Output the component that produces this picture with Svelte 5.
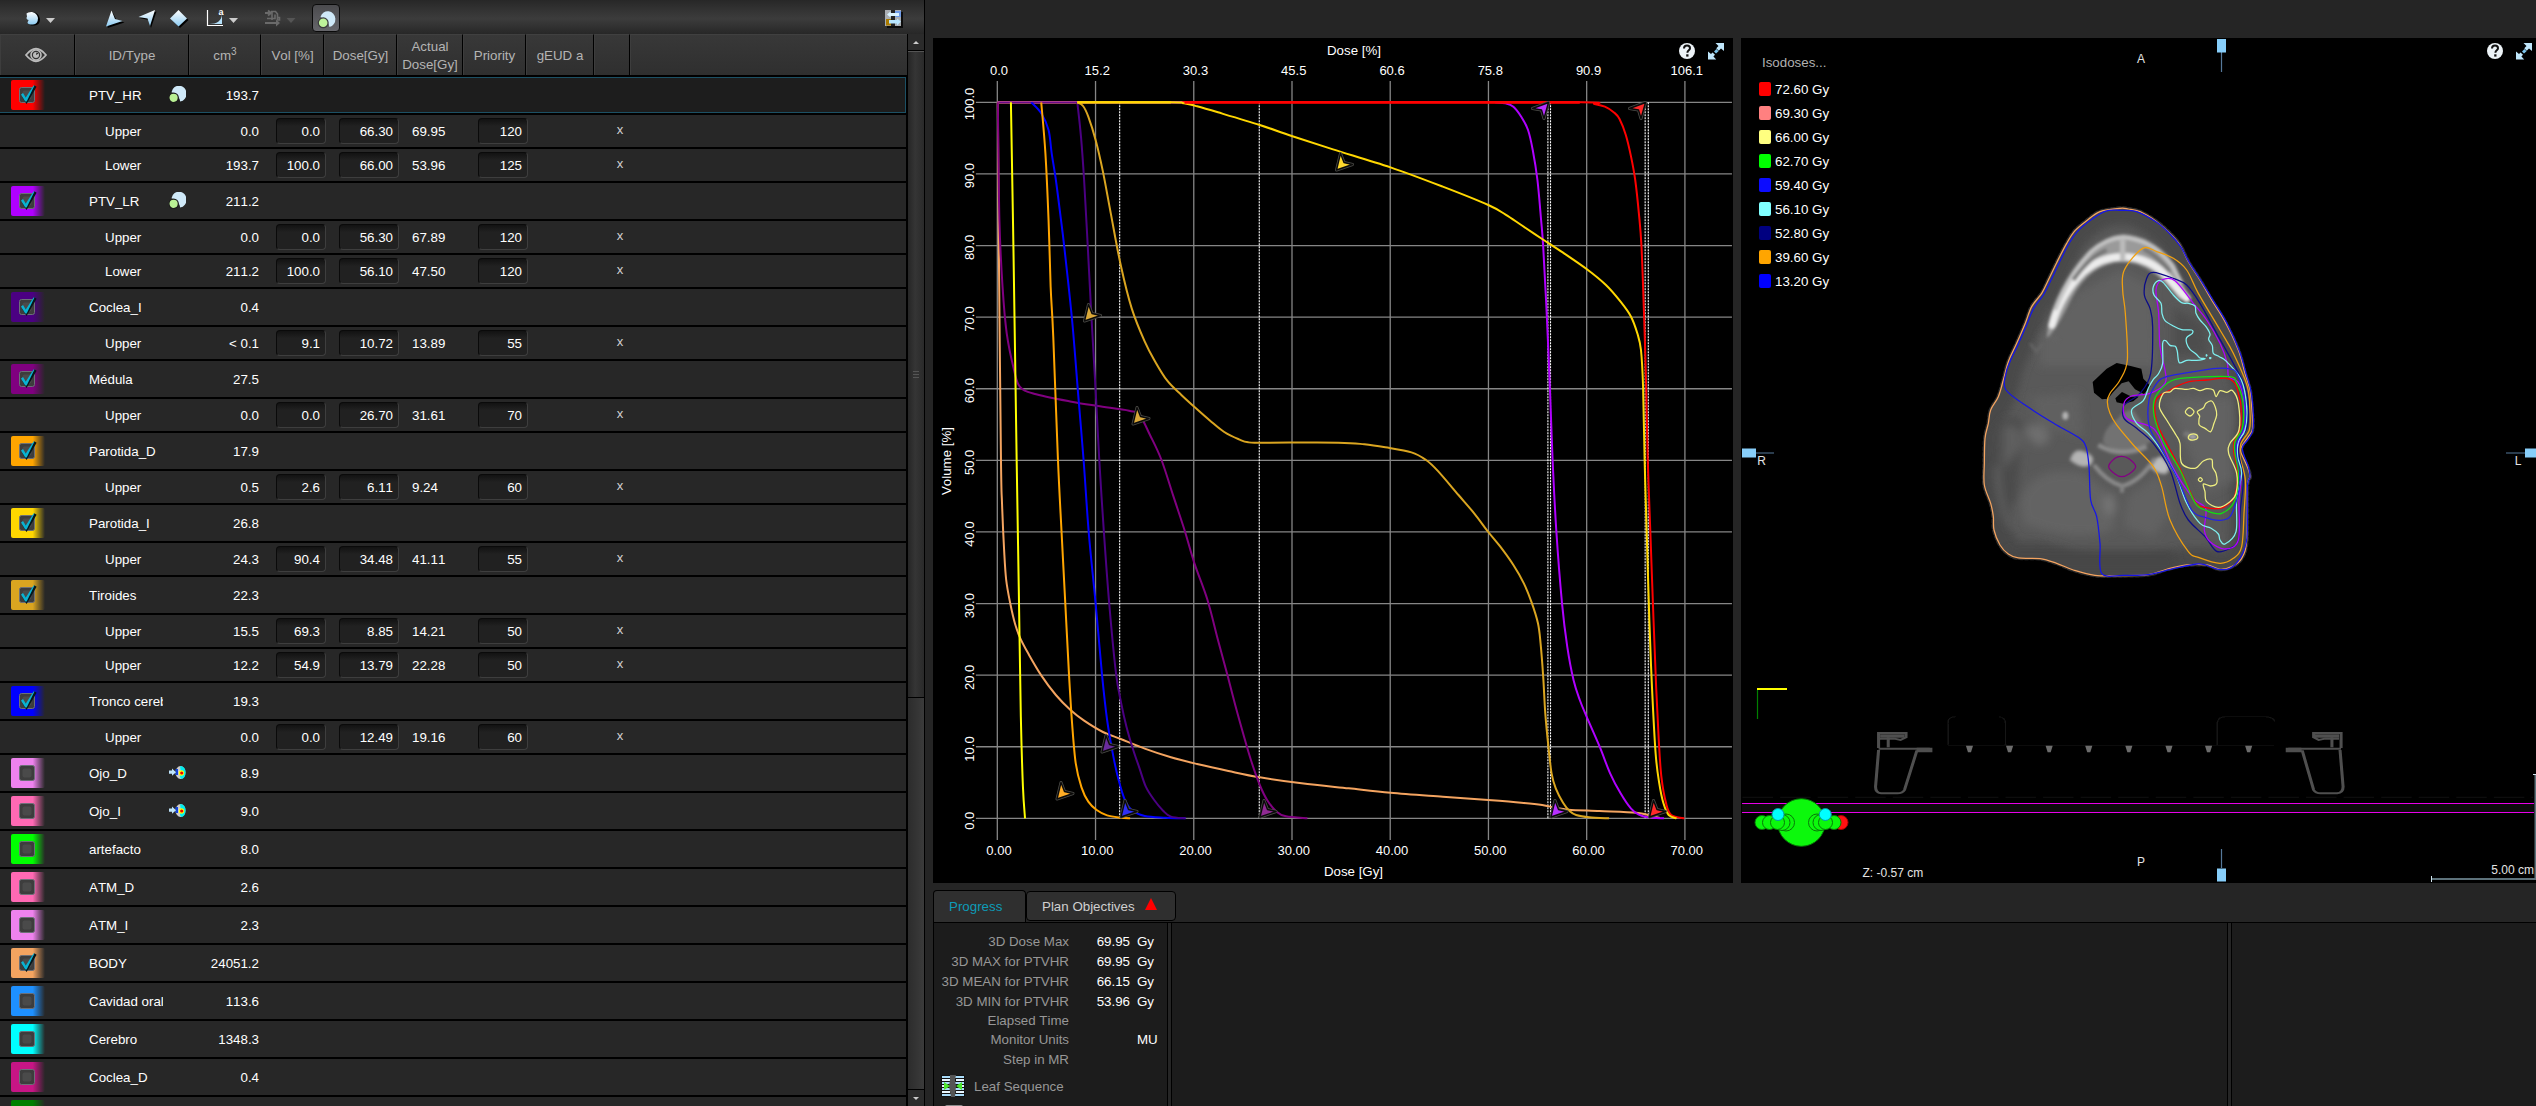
<script>
  const headers = [
    { w: 75, icon: 'eye' }, { w: 114, t: 'ID/Type' }, { w: 72, t: 'cm', sup: '3' }, { w: 63, t: 'Vol [%]' },
    { w: 73, t: 'Dose[Gy]' }, { w: 66, t: 'Actual Dose[Gy]' }, { w: 63, t: 'Priority' }, { w: 68, t: 'gEUD a' },
    { w: 36, t: '' }, { w: 278, t: '' }
  ];

  const structures = [
    { name: 'PTV_HR', c: '#ff0000', v: '193.7', on: true, icon: 'target', sel: true, obj: [
      ['Upper', '0.0', '0.0', '66.30', '69.95', '120'], ['Lower', '193.7', '100.0', '66.00', '53.96', '125']] },
    { name: 'PTV_LR', c: '#b000ff', v: '211.2', on: true, icon: 'target', obj: [
      ['Upper', '0.0', '0.0', '56.30', '67.89', '120'], ['Lower', '211.2', '100.0', '56.10', '47.50', '120']] },
    { name: 'Coclea_I', c: '#4b0082', v: '0.4', on: true, obj: [['Upper', '< 0.1', '9.1', '10.72', '13.89', '55']] },
    { name: 'Médula', c: '#800080', v: '27.5', on: true, obj: [['Upper', '0.0', '0.0', '26.70', '31.61', '70']] },
    { name: 'Parotida_D', c: '#ffa500', v: '17.9', on: true, obj: [['Upper', '0.5', '2.6', '6.11', '9.24', '60']] },
    { name: 'Parotida_I', c: '#ffd700', v: '26.8', on: true, obj: [['Upper', '24.3', '90.4', '34.48', '41.11', '55']] },
    { name: 'Tiroides', c: '#daa520', v: '22.3', on: true, obj: [
      ['Upper', '15.5', '69.3', '8.85', '14.21', '50'], ['Upper', '12.2', '54.9', '13.79', '22.28', '50']] },
    { name: 'Tronco cerebral', c: '#0000ff', v: '19.3', on: true, obj: [['Upper', '0.0', '0.0', '12.49', '19.16', '60']] },
    { name: 'Ojo_D', c: '#ee82ee', v: '8.9', icon: 'spare', obj: [] },
    { name: 'Ojo_I', c: '#ff69b4', v: '9.0', icon: 'spare', obj: [] },
    { name: 'artefacto', c: '#00ff00', v: '8.0', obj: [] },
    { name: 'ATM_D', c: '#ff69b4', v: '2.6', obj: [] },
    { name: 'ATM_I', c: '#ee82ee', v: '2.3', obj: [] },
    { name: 'BODY', c: '#f4a460', v: '24051.2', on: true, obj: [] },
    { name: 'Cavidad oral', c: '#1e90ff', v: '113.6', obj: [] },
    { name: 'Cerebro', c: '#00ffff', v: '1348.3', obj: [] },
    { name: 'Coclea_D', c: '#c71585', v: '0.4', obj: [] },
    { name: '', c: '#008000', v: '', obj: [] }
  ];

  const isodoses = [
    ['72.60 Gy', '#ff0000'], ['69.30 Gy', '#ff8080'], ['66.00 Gy', '#ffff80'], ['62.70 Gy', '#00ff00'],
    ['59.40 Gy', '#0c0cff'], ['56.10 Gy', '#80ffff'], ['52.80 Gy', '#000080'], ['39.60 Gy', '#ffa500'], ['13.20 Gy', '#0000ff']
  ];

  const metrics = [
    ['3D Dose Max', '69.95', 'Gy', 20], ['3D MAX for PTVHR', '69.95', 'Gy', 20], ['3D MEAN for PTVHR', '66.15', 'Gy', 20],
    ['3D MIN for PTVHR', '53.96', 'Gy', 20], ['Elapsed Time', '', '', 19], ['Monitor Units', '', 'MU', 19], ['Step in MR', '', '', 20]
  ];

  const topTicks = ['0.0', '15.2', '30.3', '45.5', '60.6', '75.8', '90.9', '106.1'];
  const botTicks = ['0.00', '10.00', '20.00', '30.00', '40.00', '50.00', '60.00', '70.00'];
  const volTicks = ['100.0', '90.0', '80.0', '70.0', '60.0', '50.0', '40.0', '30.0', '20.0', '10.0', '0.0'];

  // Catmull-Rom spline through a flat list of x,y pairs
  function spline(s, closed = false, k = 6) {
    const n = s.trim().split(/[\s,]+/).map(Number);
    const p = [];
    for (let i = 0; i < n.length; i += 2) p.push([n[i], n[i + 1]]);
    const len = p.length;
    const at = (i) => (closed ? p[(i + len) % len] : p[Math.max(0, Math.min(len - 1, i))]);
    let d = `M${p[0][0]} ${p[0][1]}`;
    for (let i = 0; i < (closed ? len : len - 1); i++) {
      const a = at(i - 1), b = at(i), c = at(i + 1), e = at(i + 2);
      d += `C${b[0] + (c[0] - a[0]) / k} ${b[1] + (c[1] - a[1]) / k} ${c[0] - (e[0] - b[0]) / k} ${c[1] - (e[1] - b[1]) / k} ${c[0]} ${c[1]}`;
    }
    return closed ? d + 'Z' : d;
  }

  const curves = [
    ['#f4a460', '149,247 151,700 155,1320 157,1450 161,1590 165,1680 173,1752 182,1812 192,1855 207,1900 232,1966 260,2025 288,2070 314,2102 350,2136 384,2157 430,2186 480,2212 530,2232 590,2253 650,2272 730,2290 820,2305 900,2318 1000,2330 1087,2340 1150,2348 1190,2355 1215,2363 1240,2369 1300,2373 1370,2378 1395,2386 1415,2394'],
    ['#800080', '149,247 152,600 158,800 166,940 180,1050 191,1100 218,1121 290,1145 340,1158 400,1172 420,1185 440,1245 462,1320 485,1430 506,1530 525,1630 550,1740 570,1860 589,1970 603,2055 618,2140 633,2220 650,2295 664,2340 682,2375 700,2389 741,2395'],
    ['#ffff00', '174,247 179,700 185,1320 189,1700 193,2090 197,2300 201,2395'],
    ['#0000ff', '213,247 232,280 246,330 252,400 260,480 269,590 276,680 291,900 303,1130 313,1320 323,1540 336,1750 348,1960 358,2100 370,2210 380,2280 392,2340 405,2370 430,2388 470,2393 508,2395'],
    ['#ffa500', '232,247 240,400 246,600 250,800 255,950 264,1320 271,1540 278,1750 285,1960 291,2110 298,2230 309,2302 322,2345 338,2370 358,2386 384,2393 402,2395'],
    ['#4b0082', '301,247 308,350 314,480 321,680 328,890 336,1110 343,1320 352,1540 362,1750 375,1960 385,2050 395,2120 408,2190 420,2245 432,2300 448,2340 465,2372 480,2390 508,2395'],
    ['#daa520', '301,247 312,258 322,290 336,360 350,455 365,580 384,735 405,865 430,965 450,1025 473,1082 500,1125 523,1158 555,1202 582,1236 610,1258 628,1267 660,1268 800,1268 850,1273 890,1282 940,1297 968,1320 990,1352 1030,1425 1060,1480 1087,1536 1110,1580 1135,1635 1155,1690 1170,1748 1182,1810 1187,1870 1192,1970 1196,2080 1202,2180 1208,2260 1216,2305 1230,2348 1243,2374 1255,2385 1280,2392 1318,2395'],
    ['#b000ff', '1100,247 1120,250 1135,260 1150,290 1163,330 1172,390 1181,480 1188,600 1192,680 1199,890 1205,1110 1210,1320 1217,1530 1228,1750 1238,1880 1250,1980 1262,2040 1275,2090 1300,2180 1320,2260 1340,2320 1360,2366 1375,2384 1392,2392 1423,2395'],
    ['#ff0000', '501,247 900,247 1265,247 1290,252 1310,260 1328,278 1338,297 1350,345 1360,410 1368,480 1375,580 1380,680 1385,890 1389,1100 1392,1320 1397,1540 1403,1800 1408,2000 1413,2160 1418,2270 1427,2350 1437,2385 1462,2395'],
    ['#ffd700', '301,247 480,247 505,250 530,259 570,277 650,315 711,348 790,388 900,442 1000,500 1087,555 1120,584 1150,615 1190,657 1230,698 1275,747 1312,795 1340,845 1360,890 1372,940 1379,990 1383,1100 1386,1320 1390,1540 1395,1800 1400,2000 1407,2200 1414,2290 1422,2350 1432,2385 1447,2395']
  ];

  const dashes = [382, 649, 1201, 1206, 1387, 1393];

  // objective markers: tip x, tip y, colour, direction
  const markers = [
    [1336.5, 171, '#ffd92e', 0], [1084.5, 322, '#daa93a', 0], [1133, 425, '#daa93a', 0], [1102, 753, '#6a2c9c', 0],
    [1057, 800, '#ffad26', 0], [1121, 818, '#3030f4', 0], [1260, 818, '#8f2a92', 0], [1551, 818, '#b830ff', 0],
    [1649.5, 818, '#ff2a2a', 0], [1548.5, 102, '#b830ff', 1], [1645.5, 102, '#ff2a2a', 1]
  ];
  const marker = (up) => (up ? 'M0 .5L-16 6.500L-7 8L-4.500 16.500Z' : 'M0-1L4-17.500L7.500-8.500L16-6.500Z');

  const skin = '540,85 480,95 440,122 405,152 380,190 350,248 325,300 305,340 275,380 255,432 230,490 205,545 190,600 175,650 152,690 145,730 135,775 133,850 133,915 152,970 160,1010 162,1050 180,1095 205,1122 235,1134 300,1136 350,1150 400,1170 465,1186 545,1187 625,1184 680,1168 740,1155 800,1155 840,1168 875,1160 905,1135 920,1080 922,920 930,890 922,860 903,818 905,800 925,770 938,745 935,680 930,630 915,580 895,510 855,425 815,360 780,300 745,245 720,195 690,160 650,125 600,95 565,87';
  const contours = [
    ['#f4a460', skin],
    ['#1616e8', '485,1180 480,1090 470,1010 452,960 447,860 438,800 415,772 350,735 270,685 198,630 198,580 212,540 235,492 259,437 281,385 310,345 332,302 357,250 386,192 412,155 447,124 495,94 540,91 590,95 650,127 690,162 722,200 748,248 783,302 820,362 860,428 898,512 918,580 934,640 940,740 927,775 907,805 925,860 930,890 922,920 922,1050 918,1090 900,1135 870,1165 835,1168 800,1156 770,1152 700,1166 625,1184 550,1186'],
    ['#f0a010', '608,205 553,270 548,330 556,400 562,540 540,600 510,640 502,665 510,700 530,735 580,795 640,860 665,920 690,1020 745,1115 775,1132 840,1150 880,1135 905,1100 912,1000 916,900 900,830 903,790 928,750 930,700 922,620 880,520 840,450 775,340 740,270 700,235 650,215'],
    ['#0c0c88', '640,277 620,295 613,345 630,385 638,440 632,580 600,640 565,665 550,680 552,715 590,745 640,790 690,870 720,970 745,1020 795,1070 830,1114 870,1105 895,1080 901,990 910,900 898,830 898,790 922,740 925,680 915,620 880,550 830,460 780,370 740,315 700,295'],
    ['#b000ff', '665,300 705,302 760,370 800,420 840,490 862,550 866,590 893,605 910,650 914,740 893,800 893,870 903,900 897,960 895,1080 855,1107 810,1085 793,1050 797,985 760,955 700,865 655,765 625,737 560,715 552,670 575,648 630,640 675,610 675,570 660,500 656,400 648,330'],
    ['#7ff0f0', '655,302 640,320 642,345 663,370 666,400 675,422 700,438 725,449 755,450 757,460 740,473 740,490 750,508 768,522 780,534 795,536 770,541 740,541 718,548 712,515 706,499 690,496 677,482 668,490 668,550 655,582 640,598 625,625 610,662 575,690 590,730 625,760 670,820 710,890 740,970 780,1030 812,1044 835,1062 840,1080 855,1092 888,1055 890,960 905,880 893,830 895,785 915,750 920,680 904,600 860,545 838,530 820,520 817,497 806,478 810,462 798,440 780,420 768,400 765,378 745,370 725,368 700,345 670,308'],
    ['#2222e6', '680,590 760,575 830,565 870,567 890,580 912,650 915,730 890,790 890,830 900,900 890,960 870,1010 840,1021 795,1012 755,990 710,890 660,800 628,740 627,660 650,610'],
    ['#ff0000', '740,607 800,600 860,595 885,610 895,640 903,680 900,750 882,785 882,820 893,880 885,945 865,972 840,985 795,982 765,965 720,865 680,790 650,725 648,660 690,630'],
    ['#10e010', '700,600 760,592 870,590 890,610 908,660 908,740 885,785 885,820 895,880 885,960 845,1000 800,992 765,968 720,870 670,785 643,710 643,660 665,625'],
    ['#eeee80', '670,640 690,636 705,625 740,628 760,625 780,632 800,626 820,630 828,650 840,632 860,637 878,632 895,670 897,750 870,790 866,820 890,880 888,940 870,965 835,982 800,965 795,935 790,912 812,918 830,910 828,880 818,862 815,838 790,843 765,865 725,850 720,790 708,765 680,720 658,680'],
    ['#eeee80', '815,663 826,682 830,705 822,730 812,755 795,745 778,735 777,718 779,708 772,695 790,684 798,670'],
    ['#eeee80', '748,683 762,695 750,708 736,696'],
    ['#eeee80', '745,771 752,763 769,764 773,774 762,780 748,778'],
    ['#eeee80', '781,893 787,899 781,905 775,899'],
    ['#7ff0f0', '799,524 801,526 799,528'], ['#7ff0f0', '809,533 813,534 810,536'],
    ['#840084', '545,829 525,835 506,860 525,882 545,890 567,882 587,860 567,836']
  ];
  const pegs = [452, 531, 609, 687, 766, 845, 923, 1002];
</script>

{#snippet target()}
  <svg class="target" viewBox="0 0 17 17">
    <path d="M2.500 6.200A7.600 8 0 1 1 11.200 15.600Q10.500 9.500 2.500 6.200Z" fill="#cfe9f8" />
    <circle cx="4.600" cy="11.800" r="4.700" fill="#b9f094" stroke="#1a1a1a" stroke-width="1.200" />
  </svg>
{/snippet}

{#snippet tools(cls)}
  <svg class={cls} viewBox="0 0 46 18">
    <circle cx="9" cy="9" r="8" fill="#edf3f7" />
    <path d="M6 6.600q0-3 3-3t3 2.700c0 2-2.600 2-2.600 4.400" fill="none" stroke="#111" stroke-width="2" />
    <rect x="8.200" y="12.300" width="2.300" height="2.300" fill="#111" />
    <path d="M46 1v8l-3-2.600-2.300 2.400-2.400-2.500 2.200-2.200L37.500 1ZM30 17.500v-8l3 2.500 1.600-1.600 2.400 2.400-1.600 1.700 2.800 3Z" fill="#bfe6fb" />
    <path d="M37 10.500l2.500-2.300" stroke="#7cc4ec" stroke-width="3" />
  </svg>
{/snippet}

<main>
  <section class="left">
    <div class="toolbar">
      <svg width="640" height="34" viewBox="0 0 640 34">
        <defs>
          <linearGradient id="ice" x1="0" y1="0" x2="0" y2="1"><stop offset="0" stop-color="#fff" /><stop offset="1" stop-color="#8ccbf2" /></linearGradient>
          <linearGradient id="press" x1="0" y1="0" x2="0" y2="1"><stop offset="0" stop-color="#4a4a4d" /><stop offset="1" stop-color="#66666b" /></linearGradient>
        </defs>
        <path d="M28 14q1-2 5-2 6 1 7 7 0 6-5.500 6.500-5 .5-6-2Z" fill="#000" />
        <path d="M26.500 13.500q1.500-1.700 5.500-1.500 5 1 6 6 0 6-5 6.500-5 .5-5.500-2l1-2.500q-3-1-1.500-3.500Z" fill="url(#ice)" />
        <path d="M46 18h9l-4.500 5Z" fill="#ccc" />
        <path d="M107.500 28l5-16 4 8 8 2.500Z" fill="#000" />
        <path d="M106 26.500l5.500-16 3.500 8.500 7.500 2Z" fill="url(#ice)" />
        <path d="M156.500 11.500l-17 6.500 9 2 2.500 8Z" fill="#000" />
        <path d="M155 10l-16.500 7 9 1.500 2.500 7.500Z" fill="url(#ice)" />
        <path d="M180 11.500l8.500 8.500-8.500 8-8-8Z" fill="#000" />
        <path d="M178.500 10l8.500 8.500-8.500 8-8.500-8Z" fill="url(#ice)" />
        <path d="M207.500 10v15.500h15.500" fill="none" stroke="#fff" stroke-width="1.200" />
        <path d="M209 24q12 0 13-9.500V24Z" fill="#b4e0fa" />
        <text x="218.500" y="14.800" font-size="9" font-weight="bold" fill="#fff">a</text>
        <path d="M229 18h9l-4.500 5Z" fill="#ccc" />
        <path d="M265 13h5M268 10.500l3 2.500-3 2.500M265 23h12" stroke="#6a6a6a" stroke-width="1.800" fill="none" />
        <path d="M271 11.500h4.500l2 2.500v6h2v-2.500h-2M272 20v-8M275 14.500v4h-8" stroke="#6a6a6a" stroke-width="1.600" fill="none" />
        <path d="M276 19.500l4 3.500-4 3.500Z" fill="#6a6a6a" />
        <path d="M286.500 18h9l-4.500 5Z" fill="#555" />
        <rect x="312.500" y="4.500" width="27" height="27" rx="3.500" fill="url(#press)" stroke="#0a0a0a" />
        <path d="M320.500 17A7.600 8 0 1 1 329.500 27Q328.500 20.500 320.500 17Z" fill="#cfe9f8" />
        <circle cx="323.200" cy="22.800" r="4.900" fill="#bdf29a" stroke="#3a3a3c" stroke-width="1.200" />
      </svg>
      <svg class="swap" width="20" height="19" viewBox="0 0 20 19">
        <rect x="2" y="2" width="16" height="16" fill="#0c0c0c" />
        <rect width="16" height="16" fill="#a9adb2" />
        <rect x="6" width="4" height="16" fill="#222" />
        <rect x="10" y="1" width="6" height="6" fill="#6f9be8" />
        <rect x="1" y="9" width="5" height="6.500" fill="#a87a00" />
        <path d="M2 4.500l3.500-3v1.500H14v3H5.500v1.500Z" fill="#d8f2ff" />
        <path d="M16 11.500l-4-3v1.500H4v3.500h8v2Z" fill="#b8e6ff" />
      </svg>
    </div>

    <div class="body">
      <div class="table">
        <div class="thead">
          {#each headers as h}
            <div class="th" style="width:{h.w}px">
              {#if h.icon}
                <svg class="eye" viewBox="0 0 22 16"><path d="M1 8q10-12.500 20 0q-10 12.500-20 0Z" fill="none" stroke="#bcbcbc" stroke-width="1.800" /><circle cx="11" cy="8" r="5" fill="none" stroke="#bcbcbc" stroke-width="1.600" /><circle cx="11" cy="8" r="3" fill="#bcbcbc" /><path d="M11 8l.5-2.600 2 1.200Z" fill="#222" /></svg>
              {:else}
                <span>{h.t}{#if h.sup}<sup>{h.sup}</sup>{/if}</span>
              {/if}
            </div>
          {/each}
        </div>
        {#each structures as s}
          <div class="row struct" class:sel={s.sel}>
            <div class="swatch" style="--c:{s.c}">
              <svg viewBox="0 0 20 20" width="20" height="20">
                <rect x="1.500" y="3.500" width="15" height="15" rx="2" fill="#3d3d3d" stroke="#6c7078" />
                <rect x="4.500" y="6.500" width="9" height="9" rx="2" fill="#505050" opacity=".7" />
                {#if s.on}
                  <path d="M5.500 12.500l3 5 9-15.500" fill="none" stroke="#06161a" stroke-width="2.600" />
                  <path d="M3 10.500l2-1.500 2.800 4.500L15.500 1.500h1L8.700 17.500H7.200Z" fill="#0ab2d2" />
                {/if}
              </svg>
            </div>
            <div class="name">{s.name}</div>
            <div class="vol">
              <span class="ic">
                {#if s.icon === 'target'}{@render target()}
                {:else if s.icon === 'spare'}
                  <svg class="target" viewBox="0 0 17 17"><ellipse cx="11.500" cy="8.500" rx="5" ry="6.500" fill="#ccc" /><path d="M11 2q5.500 0 5.500 6.500T12 15q-2-3 0-6Z" fill="#0ee" /><circle cx="12.500" cy="9" r="2.700" fill="#ff0" /><circle cx="12.700" cy="9" r="1.600" fill="#e00" /><rect x="6.500" y="5" width="2.500" height="6" fill="#14d" /><path d="M0 6.500h3V4.500l4 3.700-4 3.500V9.700H0Z" fill="#bfe4fb" /></svg>
                {/if}
              </span>
              <span>{s.v}</span>
            </div>
          </div>
          {#each s.obj as o}
            <div class="row obj">
              <div class="kind">{o[0]}</div>
              <div class="num">{o[1]}</div>
              <div class="field f1">{o[2]}</div>
              <div class="field f2">{o[3]}</div>
              <div class="act">{o[4]}</div>
              <div class="field f3">{o[5]}</div>
              <div class="del">x</div>
            </div>
          {/each}
        {/each}
      </div>
      <div class="scroll">
        <div class="sbtn"><i class="up"></i></div>
        <div class="thumb"><i></i><i></i><i></i></div>
        <div class="track"></div>
        <div class="sbtn"><i class="down"></i></div>
      </div>
    </div>
  </section>

  <section class="right">
    <div class="views">
      <div class="panel dvh">
        <svg class="layer" viewBox="25 54 1530 2535" preserveAspectRatio="none">
          <g stroke="#868686" stroke-width="1.300" fill="none">
            {#each topTicks as _, i}<path vector-effect="non-scaling-stroke" d="M{148 + i * 187.86} 183V2460" />{/each}
            {#each volTicks as _, i}<path vector-effect="non-scaling-stroke" d="M107 {247 + i * 214.8}H1553" />{/each}
          </g>
          {#each dashes as x}<path vector-effect="non-scaling-stroke" d="M{x} 247V2395" stroke="#fff" stroke-width="1.100" stroke-dasharray="2 1" />{/each}
          <path vector-effect="non-scaling-stroke" d="M148 247H510" stroke="#c05088" stroke-width="2.600" />
          <path vector-effect="non-scaling-stroke" d="M148 247H301" stroke="#6a0a8a" stroke-width="1.200" />
          {#each curves as [c, pts]}<path vector-effect="non-scaling-stroke" d={spline(pts)} fill="none" stroke={c} stroke-width="2" />{/each}
          <path vector-effect="non-scaling-stroke" d="M301 247H480" stroke="#ffd700" stroke-width="2.400" />
          <path vector-effect="non-scaling-stroke" d="M506 247H1262" stroke="#ff0000" stroke-width="2.600" />
        </svg>
        <svg class="layer" viewBox="933 38 800 845">
          {#each markers as [x, y, c, up]}
            <g transform="translate({x} {y})" stroke-linejoin="round">
              <path d={marker(up)} fill="#333" stroke="#4c4c48" stroke-width="3" />
              <path d={marker(up)} fill={c} stroke="#0a0a0a" stroke-width="1.400" />
            </g>
          {/each}
          <g fill="#fff" font-size="13" text-anchor="middle">
            <text x="1354" y="55" font-size="13.300">Dose [%]</text>
            <text x="1353.500" y="876" font-size="13.300">Dose [Gy]</text>
            {#each topTicks as t, i}<text x={999 + i * 98.26} y="75">{t}</text>{/each}
            {#each botTicks as t, i}<text x={999 + i * 98.26} y="855">{t}</text>{/each}
            {#each volTicks as t, i}<text transform="translate(973.500 {104 + i * 71.67}) rotate(-90)">{t}</text>{/each}
            <text transform="translate(950.500 461) rotate(-90)" font-size="13.300">Volume [%]</text>
          </g>
        </svg>
        {@render tools('tools t1')}
      </div>

      <div class="panel ct">
        <svg class="layer" viewBox="1741 38 795 845">
          <defs>
            <filter id="b3"><feGaussianBlur stdDeviation="4" /></filter>
            <filter id="b8" x="-30%" y="-30%" width="160%" height="160%"><feGaussianBlur stdDeviation="12" /></filter>
            <filter id="b1"><feGaussianBlur stdDeviation="1.500" /></filter>
            <clipPath id="skinclip"><path d={spline(skin, true)} /></clipPath>
          </defs>
          <g transform="translate(1940 180) scale(.33333)">
            <path d={spline(skin, true)} fill="#595959" stroke="#2c2c2c" stroke-width="12" stroke-dasharray="9 8" stroke-linecap="round" />
            <g clip-path="url(#skinclip)">
              <path d={spline(skin, true)} fill="none" stroke="#494949" stroke-width="100" filter="url(#b8)" />
              <g filter="url(#b8)">
                <path d="M410 340L540 270L640 320L650 560L300 560L300 470Z" fill="#626262" />
                <path d="M165 760Q200 680 250 730L230 960L180 1010Z" fill="#4b4b4b" />
                <path d="M270 650L420 640L430 770L300 740Z" fill="#606060" />
                <path d="M250 750Q300 710 330 765Q320 805 285 795Z" fill="#6e6e6e" />
                <path d="M190 740Q240 720 250 790L190 870Z" fill="#5e5e5e" />
                <path d="M240 960Q280 850 430 880L530 950L520 1050Q400 1090 250 1030Z" fill="#636363" />
                <path d="M560 950L660 880L690 1000L640 1070L550 1040Z" fill="#626262" />
                <path d="M485 960L515 940L530 990L500 1010Z" fill="#747474" />
                <path d="M700 380L790 430L810 520L700 530Z" fill="#4e4e4e" />
                <path d="M680 660L880 650L880 900L800 940Z" fill="#626262" />
                <path d="M200 1110Q500 1110 700 1110L720 1180H250Z" fill="#464646" />
                <path d="M170 860Q180 1000 215 1040" fill="none" stroke="#626262" stroke-width="14" />
              </g>
              <g filter="url(#b3)">
                <path d="M320 475Q325 380 395 275Q470 168 550 163Q640 168 706 255L750 362L715 358Q640 248 548 246Q450 250 395 355Q350 450 320 475Z" fill="#9a9a9a" />
                <path d="M336 435Q360 345 430 275Q485 230 548 230Q635 232 690 300Q715 330 740 355" fill="none" stroke="#ececec" stroke-width="22" stroke-linecap="round" />
                <path d="M345 390Q390 280 455 213Q500 175 550 172Q640 180 695 255L725 310" fill="none" stroke="#c4c4c4" stroke-width="12" />
                <path d="M400 300Q450 230 500 210M610 207Q650 225 690 275" fill="none" stroke="#757575" stroke-width="12" />
                <path d="M548 180V245" stroke="#bcbcbc" stroke-width="16" />
                <path d="M490 790Q485 750 535 715Q550 690 580 690L640 780Q560 840 490 790Z" fill="#727272" />
                <path d="M475 795Q540 835 620 800" fill="none" stroke="#8c8c8c" stroke-width="14" />
                <path d="M392 840Q400 806 430 815Q470 830 452 852Q430 870 392 840Z" fill="#b4b4b4" stroke="#989898" stroke-width="6" />
                <path d="M632 860Q650 826 665 832Q700 860 678 880Q650 884 632 860Z" fill="#bcbcbc" stroke="#959595" stroke-width="6" />
                <path d="M462 855Q500 905 546 918Q600 905 645 835" fill="none" stroke="#8a8a8a" stroke-width="13" />
                <path d="M546 915V938" stroke="#848484" stroke-width="12" />
                <ellipse cx="376" cy="707" rx="9" ry="12" fill="#b4b4b4" />
                <ellipse cx="758" cy="770" rx="12" ry="8" fill="#a8a8a8" />
                <ellipse cx="740" cy="762" rx="10" ry="8" fill="#787878" />
                <path d="M270 490L290 515L308 492M335 472L358 480" fill="none" stroke="#656565" stroke-width="8" />
              </g>
              <g filter="url(#b1)">
                <path d="M458 606L500 566L530 549L572 558L604 566L610 596L632 618L612 642L585 628L566 604L545 610L520 636L504 656L486 658L462 638Z" fill="#000" />
                <path d="M526 655L546 636L575 650L596 650L580 664L550 671L530 667Z" fill="#000" />
              </g>
            </g>
            {#each contours as [c, pts]}<path d={spline(pts, true)} fill="none" stroke={c} stroke-width="3.800" />{/each}
          </g>

          <svg x="1740" y="660" width="796" height="240" viewBox="0 0 1568 720" preserveAspectRatio="none">
            <g filter="url(#b1)" fill="none" stroke="#505050" stroke-width="6">
              <path d="M273 264V219H327V232L316 240L304 236H276M292 232V262M273 266H376V274H348L324 390Q320 400 310 400H278Q267 398 267 380L273 270" />
              <path d="M1184 264V219H1130V232L1140 240L1152 236H1180M1166 232V262M1184 266H1078V274H1108L1130 390Q1134 400 1144 400H1176Q1188 398 1188 380L1182 270" />
              <path d="M276 228H324M1132 228H1180M348 269H374M1080 269H1106" stroke-width="11" />
              <path d="M410 255V186Q410 170 425 170M510 170Q523 172 523 190V256M940 256V190Q941 170 955 170H1035Q1053 172 1053 185" stroke="#141414" stroke-width="3" />
              <path d="M410 256H1053" stroke="#101010" stroke-width="3" />
            </g>
            {#each pegs as x}<path d="M{x - 7} 257h14l-4 20h-6Z" fill="#6c6c6c" filter="url(#b1)" />{/each}
            <path d="M5 412H1562" stroke="#0d0d0d" stroke-width="4" stroke-dasharray="60 14" />
            <rect x="4" y="431" width="1560" height="26" fill="#0c0c0c" />
            <path d="M4 430.500H1564M4 457.500H1564" stroke="#e800e8" stroke-width="3" />
          </svg>

          <path d="M1757 689H1787" stroke="#ff0" stroke-width="2" />
          <path d="M1757.500 690V719" stroke="#008000" stroke-width="1.200" />
          <g stroke="#087808" fill="#0cf80c">
            <circle cx="1841" cy="822.500" r="7" fill="#f11" stroke="#a00" />
            <circle cx="1834" cy="822.500" r="7" /><circle cx="1762" cy="822.500" r="7" /><circle cx="1769.500" cy="822.500" r="7" />
            <circle cx="1801.400" cy="822.500" r="23.800" />
            <circle cx="1786" cy="822.500" r="8.500" /><circle cx="1782" cy="822.500" r="8" /><circle cx="1777.500" cy="822.500" r="7" />
            <circle cx="1817" cy="822.500" r="8.500" /><circle cx="1821" cy="822.500" r="8" /><circle cx="1825.500" cy="822.500" r="7" />
            <circle cx="1778" cy="814.500" r="6" fill="#0ff" stroke="#0899a0" /><circle cx="1825.300" cy="814.500" r="6" fill="#0ff" stroke="#0899a0" />
          </g>
          <g stroke="#55789a" stroke-width="1.200">
            <path d="M2221.500 52V72M2221.500 849V868M1756 453H1774M2506 453H2526" />
          </g>
          <g fill="#87cefa">
            <rect x="2217" y="39" width="9" height="13.500" /><rect x="2217" y="868.500" width="9" height="13" />
            <rect x="1742" y="448.500" width="14" height="9" /><rect x="2525" y="448.500" width="11" height="9" />
          </g>
          <path d="M2431 879H2536M2535.500 775V879" stroke="#5d727b" stroke-width="2" />
          <path d="M2431.500 876V882M2533 774.500H2536" stroke="#cfe4ee" />
          <g fill="#e4e4e4" font-size="12">
            <text x="2141" y="63" text-anchor="middle">A</text>
            <text x="2141" y="866" text-anchor="middle">P</text>
            <text x="1761.500" y="465" text-anchor="middle">R</text>
            <text x="2518" y="465" text-anchor="middle">L</text>
            <text x="1862.500" y="877">Z: -0.57 cm</text>
            <text x="2534" y="874" text-anchor="end">5.00 cm</text>
          </g>
        </svg>
        <div class="legend">
          <div class="ltitle">Isodoses...</div>
          {#each isodoses as [t, c]}
            <div class="liso"><span class="chip" style="background:{c}"></span>{t}</div>
          {/each}
        </div>
        {@render tools('tools t2')}
      </div>
    </div>

    <div class="tabs">
      <div class="tab on">Progress</div>
      <div class="tab plan">Plan Objectives <i class="warn"></i></div>
    </div>
    <div class="bottom">
      <div class="pane metrics">
        {#each metrics as [l, v, u, h]}
          <div class="metric" style="height:{h}px"><span class="ml">{l}</span><span class="mv">{v}</span><span class="mu">{u}</span></div>
        {/each}
        <div class="leaf">
          <svg width="24" height="22" viewBox="0 0 24 22">
            <rect width="24" height="22" fill="#111" />
            <path d="M1 2h22M1 8h22M1 14h22M1 20h22" stroke="#aadcfa" stroke-width="2" />
            <path d="M1 5h8M15 5h8M1 17h8M15 17h8M1 11h2M21 11h2" stroke="#e8f6ff" stroke-width="2" />
            <path d="M9 0h6l-1 5 1 6-1 11h-4L8 11l1-6Z" fill="#555" />
            <path d="M3 7l6 4-6 4ZM21 7l-6 4 6 4Z" fill="#4be62c" />
          </svg>
          Leaf Sequence
        </div>
        <div class="stub"></div>
      </div>
      <div class="pane p2"></div>
      <div class="pane p3"></div>
    </div>
  </section>
</main>

<style>
  :global(body) { background: #252525; overflow: hidden; }
  main { display: flex; width: 2536px; height: 1106px; overflow: hidden; background: #252525; font-family: "Liberation Sans", Arial, sans-serif; font-size: 13.33px; color: #fff; font-kerning: none; }
  .left { display: flex; flex-direction: column; width: 924px; border-right: 1px solid #000; flex: none; }
  .toolbar { height: 34px; display: flex; flex: none; justify-content: space-between; background: linear-gradient(#272727, #333 30%, #3c3c3c 55%, #272727); }
  .swap { margin: 10px 19px 0 0; }
  .body { display: flex; flex: 1; min-height: 0; background: #000; }
  .table { width: 907px; margin-right: 1px; overflow: hidden; }
  .thead { display: flex; height: 41px; margin-bottom: 2px; }
  .th { box-sizing: border-box; flex: none; display: flex; align-items: center; justify-content: center; text-align: center; background: linear-gradient(#383838, #2f2f2f); border-right: 1px solid #000; border-top: 1px solid #404040; border-left: 1px solid #3d3d3d; color: #b4b4b4; line-height: 18px; padding-top: 2px; }
  .th sup { font-size: 10px; line-height: 0; vertical-align: 5px; }
  .eye { width: 22px; height: 16px; margin: -3px 4px 0 0; }
  .row { display: grid; width: 906px; margin-bottom: 2px; background: #272727; align-items: center; box-sizing: border-box; }
  .struct { height: 36px; grid-template-columns: 89px 80px 90px; }
  .struct.sel { background: #1d1d1d; box-shadow: inset -1px 0 #1c5064, inset 0 1px #1c5064, inset 0 -1px #1c5064; }
  .swatch { width: 34px; height: 30px; margin-left: 11px; border-radius: 2px; background: linear-gradient(90deg, var(--c) 64%, transparent); }
  .swatch svg { display: block; margin: 4px 0 0 7px; }
  .name { width: 74px; overflow: hidden; white-space: nowrap; line-height: 20px; padding-top: 1px; }
  .vol { display: flex; justify-content: space-between; align-items: center; padding-top: 1px; }
  .ic { display: flex; width: 17px; height: 17px; margin-top: -2px; }
  .target { width: 17px; height: 17px; display: block; }
  .obj { height: 32px; grid-template-columns: 105px 50px 104px 17px 50px 13px 60px 13px 66px 50px 67px 50px; }
  .kind { grid-column: 2; }
  .num { grid-column: 3; text-align: right; }
  .field { box-sizing: border-box; height: 26px; line-height: 25px; padding-right: 5px; text-align: right; border-radius: 4px; background: linear-gradient(#121212, #212121 30%); border: 1px solid #0a0a0a; border-right-color: #3e3e3e; border-bottom-color: #3e3e3e; }
  .f1 { grid-column: 5; }
  .f2 { grid-column: 7; }
  .act { grid-column: 9; }
  .f3 { grid-column: 10; }
  .del { grid-column: 12; text-align: center; color: #d0d0d0; font-size: 13px; margin-top: -3px; }
  .scroll { width: 16px; display: flex; flex-direction: column; }
  .sbtn { height: 16px; background: #2b2b2b; display: flex; align-items: center; justify-content: center; flex: none; }
  .up, .down { border: 3.5px solid transparent; }
  .up { border-top: 0; border-bottom-color: #ccc; }
  .down { border-bottom: 0; border-top-color: #ccc; }
  .thumb { height: 645px; margin: 1px 0; border-top: 1px solid #555; background: linear-gradient(90deg, #262626, #353535 45%, #2a2a2a); display: flex; flex-direction: column; align-items: center; justify-content: center; gap: 2px; }
  .thumb i { width: 6px; height: 1px; background: #555; }
  .track { flex: 1; background: linear-gradient(90deg, #2c2c2c, #3b3b3b); margin-bottom: 1px; }
  .right { flex: 1; display: flex; flex-direction: column; padding: 38px 0 0 8px; min-width: 0; }
  .views { display: flex; gap: 8px; height: 845px; }
  .panel { position: relative; background: #000; overflow: hidden; flex: none; }
  .dvh { width: 800px; }
  .ct { width: 795px; }
  .layer { position: absolute; inset: 0; width: 100%; height: 100%; }
  .tools { position: absolute; top: 4px; width: 46px; height: 18px; }
  .t1 { right: 9px; }
  .t2 { right: 4px; }
  .legend { position: relative; padding: 14px 0 0 18px; }
  .ltitle { color: #b0b0b0; margin: 2px 0 8px 3px; line-height: 18px; height: 18px; }
  .liso { display: flex; align-items: center; height: 24px; gap: 4px; position: relative; top: -3px; }
  .chip { width: 12px; height: 14px; border-radius: 2px; }
  .tabs { display: flex; height: 39px; align-items: flex-end; flex: none; }
  .tab { box-sizing: border-box; background: #2f2f2f; border: 1px solid #000; border-radius: 4px 4px 0 0; display: flex; align-items: center; }
  .tab.on { width: 93px; height: 32px; padding-left: 15px; color: #0d9cb8; border-bottom: 0; }
  .plan { width: 150px; height: 30px; margin-bottom: 1px; padding-left: 15px; color: #d0d0d0; border-radius: 4px; }
  .warn { border: 6px solid transparent; border-top: 0; border-bottom: 12px solid #f00; margin: -4px 0 0 10px; }
  .bottom { display: flex; flex: 1; border-top: 1px solid #000; gap: 3px; min-height: 0; }
  .pane { background: #1c1c1c; border-left: 1px solid #000; border-right: 1px solid #000; box-sizing: border-box; }
  .metrics { width: 235px; padding-top: 8px; overflow: hidden; }
  .metric { display: flex; align-items: center; }
  .ml { width: 135px; text-align: right; color: #979797; }
  .mv { width: 61px; text-align: right; }
  .mu { margin-left: 7px; }
  .leaf { display: flex; align-items: center; gap: 9px; margin: 6px 0 0 7px; height: 22px; color: #979797; }
  .stub { width: 18px; height: 4px; margin: 8px 0 0 11px; background: #8c8c8c; border-radius: 2px 2px 0 0; }
  .p2 { width: 1057px; }
  .p3 { flex: 1; border-right: 0; }
</style>
